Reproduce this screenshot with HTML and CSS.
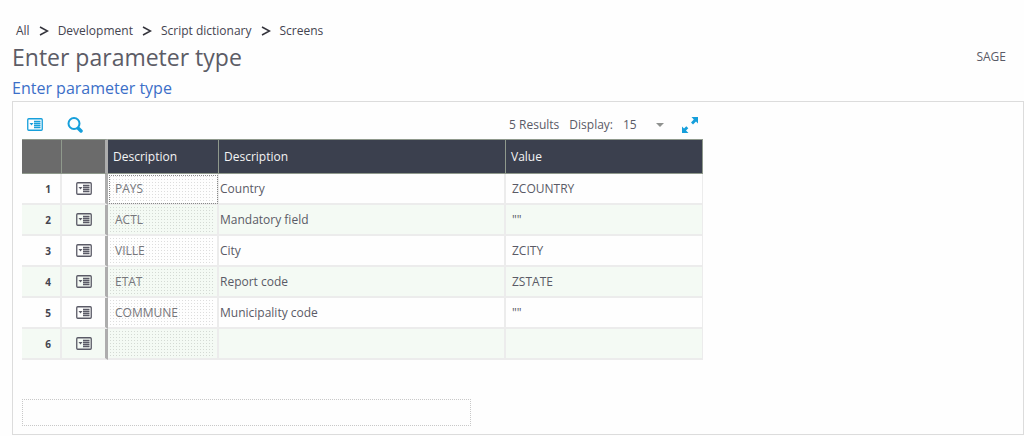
FILE: index.html
```html
<!DOCTYPE html>
<html lang="en">
<head>
  <meta charset="UTF-8" />
  <meta name="viewport" content="width=device-width, initial-scale=1" />
  <title>Enter parameter type</title>
  <link rel="stylesheet" href="styles.css">
</head>
<body>

  <svg class="icon-defs" aria-hidden="true">
    <symbol id="icon-card" viewBox="0 0 16 13">
      <rect x="0.75" y="0.75" width="14.5" height="11.5" rx="1" fill="none" stroke="currentColor" stroke-width="1.3" />
      <path d="M2.500 5h4L4.500 7.500z" fill="currentColor" />
      <path d="M7 3.500h6.500M7 5.500h6.500M7 7.500h6.500M7 9.500h6.500" stroke="currentColor" stroke-width="1.300" />
    </symbol>
  </svg>

  <header class="page-header">
    <nav class="breadcrumb" aria-label="Breadcrumb">
      <a href="#">All</a>
      <svg class="chevron" viewBox="0 0 10 10"><path d="M1 1l7.500 4L1 9" /></svg>
      <a href="#">Development</a>
      <svg class="chevron" viewBox="0 0 10 10"><path d="M1 1l7.500 4L1 9" /></svg>
      <a href="#">Script dictionary</a>
      <svg class="chevron" viewBox="0 0 10 10"><path d="M1 1l7.500 4L1 9" /></svg>
      <a href="#">Screens</a>
    </nav>
    <div class="title-row">
      <h1>Enter parameter type</h1>
      <span class="endpoint">SAGE</span>
    </div>
    <h2>Enter parameter type</h2>
  </header>

  <main class="panel">
    <div class="grid">
      <div class="toolbar">
        <button type="button" class="tool" aria-label="Actions">
          <svg class="icon-card"><use href="#icon-card" /></svg>
        </button>
        <button type="button" class="tool" aria-label="Search">
          <svg class="icon-search" viewBox="0 0 16 16">
            <circle cx="7" cy="6.500" r="5.500" fill="none" stroke="currentColor" stroke-width="2" />
            <path d="M11.500 11.500l2.500 2.500" stroke="currentColor" stroke-width="3.500" stroke-linecap="round" />
          </svg>
        </button>
        <span class="results">5 Results</span>
        <label for="display">Display:</label>
        <span class="select">
          <select id="display">
            <option>15</option>
            <option>25</option>
            <option>50</option>
          </select>
        </span>
        <button type="button" class="tool" aria-label="Full screen">
          <svg class="icon-expand" viewBox="0 0 16 16" fill="currentColor">
            <path d="M9.500 0H16V6.500l-2-2-3 3L9 5.500l2.800-3z" />
            <path d="M6.500 16H0V9.500l2 2 2.300-2.300 2 2L4 13.500z" />
          </svg>
        </button>
      </div>

      <table class="data">
        <colgroup>
          <col class="col-num">
          <col class="col-action">
          <col class="col-code">
          <col class="col-desc">
          <col class="col-value">
        </colgroup>
        <thead>
          <tr>
            <th class="blank"></th>
            <th class="blank frozen"></th>
            <th>Description</th>
            <th>Description</th>
            <th>Value</th>
          </tr>
        </thead>
        <tbody>
          <tr>
            <td class="num">1</td>
            <td class="frozen"><button type="button" aria-label="Row 1 actions"><svg class="icon-card"><use href="#icon-card" /></svg></button></td>
            <td class="code active">PAYS</td>
            <td class="desc">Country</td>
            <td>ZCOUNTRY</td>
          </tr>
          <tr>
            <td class="num">2</td>
            <td class="frozen"><button type="button" aria-label="Row 2 actions"><svg class="icon-card"><use href="#icon-card" /></svg></button></td>
            <td class="code">ACTL</td>
            <td class="desc">Mandatory field</td>
            <td>""</td>
          </tr>
          <tr>
            <td class="num">3</td>
            <td class="frozen"><button type="button" aria-label="Row 3 actions"><svg class="icon-card"><use href="#icon-card" /></svg></button></td>
            <td class="code">VILLE</td>
            <td class="desc">City</td>
            <td>ZCITY</td>
          </tr>
          <tr>
            <td class="num">4</td>
            <td class="frozen"><button type="button" aria-label="Row 4 actions"><svg class="icon-card"><use href="#icon-card" /></svg></button></td>
            <td class="code">ETAT</td>
            <td class="desc">Report code</td>
            <td>ZSTATE</td>
          </tr>
          <tr>
            <td class="num">5</td>
            <td class="frozen"><button type="button" aria-label="Row 5 actions"><svg class="icon-card"><use href="#icon-card" /></svg></button></td>
            <td class="code">COMMUNE</td>
            <td class="desc">Municipality code</td>
            <td>""</td>
          </tr>
          <tr>
            <td class="num">6</td>
            <td class="frozen"><button type="button" aria-label="Row 6 actions"><svg class="icon-card"><use href="#icon-card" /></svg></button></td>
            <td class="code"></td>
            <td class="desc"></td>
            <td></td>
          </tr>
        </tbody>
      </table>
    </div>

    <input class="message" type="text" aria-label="Message" readonly>
  </main>

</body>
</html>
```

FILE: styles.css
```css
* {
  margin: 0;
  padding: 0;
  box-sizing: border-box;
}

body {
  background: #fefefe;
  color: #5a5a66;
  font-family: "Open Sans", "Noto Sans", sans-serif;
  font-size: 12px;
  line-height: 16px;
  padding: 23px 0 2px 12px;
}

button {
  background: none;
  border: 0;
  color: inherit;
  cursor: pointer;
}

svg {
  display: block;
}

.icon-defs {
  display: none;
}

/* === Header === */
.breadcrumb {
  display: flex;
  align-items: center;
  gap: 9px;
  padding-left: 4px;
}

.breadcrumb a {
  color: #444450;
  text-decoration: none;
}

.chevron {
  width: 10px;
  height: 10px;
  fill: none;
  stroke: #33333b;
  stroke-width: 1.5;
}

.title-row {
  display: flex;
  align-items: center;
  justify-content: space-between;
  padding-right: 18px;
}

h1 {
  color: #5c5c66;
  font-size: 23px;
  font-weight: 400;
  line-height: 36px;
}

h2 {
  color: #3c6fc8;
  font-size: 16px;
  font-weight: 400;
  line-height: 26px;
}

/* === Panel === */
.panel {
  border: 1px solid #dcdcdc;
  padding: 8px 9px;
}

.grid {
  width: 681px;
  max-width: 100%;
}

.toolbar {
  display: flex;
  align-items: center;
  height: 29px;
  padding: 0 5px;
}

.tool {
  color: #169fdb;
}

.tool + .tool {
  margin-left: 24px;
}

.icon-card {
  width: 16px;
  height: 13px;
}

.icon-search,
.icon-expand {
  width: 16px;
  height: 16px;
}

.results {
  margin-left: auto;
  margin-right: 10px;
}

.select {
  position: relative;
  margin: 0 16px 0 10px;
}

.select select {
  appearance: none;
  background: none;
  border: 0;
  color: inherit;
  display: block;
  font: inherit;
  width: 43px;
}

.select::after {
  content: "";
  position: absolute;
  right: 2px;
  top: 6px;
  border: 4px solid transparent;
  border-top-color: #8f918f;
  border-bottom: 0;
  pointer-events: none;
}

/* === Table === */
.data {
  width: 100%;
  table-layout: fixed;
  border-collapse: separate;
  border-spacing: 0;
}

.col-num { width: 40px; }
.col-action { width: 46px; }
.col-code { width: 111px; }
.col-desc { width: 287px; }

.data th {
  height: 35px;
  background: #3b404e;
  border: solid #8f998c;
  border-width: 1px 1px 1px 0;
  color: #f4f4f4;
  font-weight: 400;
  padding: 0 5px;
  text-align: left;
}

.data .blank {
  background: #6b6b6b;
}

.data td {
  height: 31px;
  border: solid #ececec;
  border-width: 0 2px 2px 0;
  padding: 0 6px;
}

.data td:last-child {
  border-right-width: 1px;
}

.data tbody tr:nth-child(even) {
  background: #f4faf4;
}

.data .num {
  color: #44444e;
  font-size: 10px;
  font-weight: 700;
  padding-right: 9px;
  text-align: right;
}

.data .frozen {
  border-right: 3px solid #adadad;
  padding: 0;
}

.data .frozen button {
  display: block;
  margin: 0 auto;
}

.data .code {
  color: #77777c;
  background-image: conic-gradient(from 270deg at 1px 1px, rgba(0, 0, 0, 0.13) 90deg, transparent 0);
  background-size: 3px 3px;
  background-clip: content-box;
  background-origin: content-box;
  padding: 2px;
  text-indent: 5px;
}

.data .active {
  outline: 1px dotted #888;
  outline-offset: -2px;
}

.data .desc {
  padding-left: 1px;
}

.message {
  display: block;
  width: 449px;
  max-width: 100%;
  height: 27px;
  margin-top: 39px;
  background: none;
  border: 1px dotted #c8c8c8;
  padding: 0 6px;
  font: inherit;
}
```
